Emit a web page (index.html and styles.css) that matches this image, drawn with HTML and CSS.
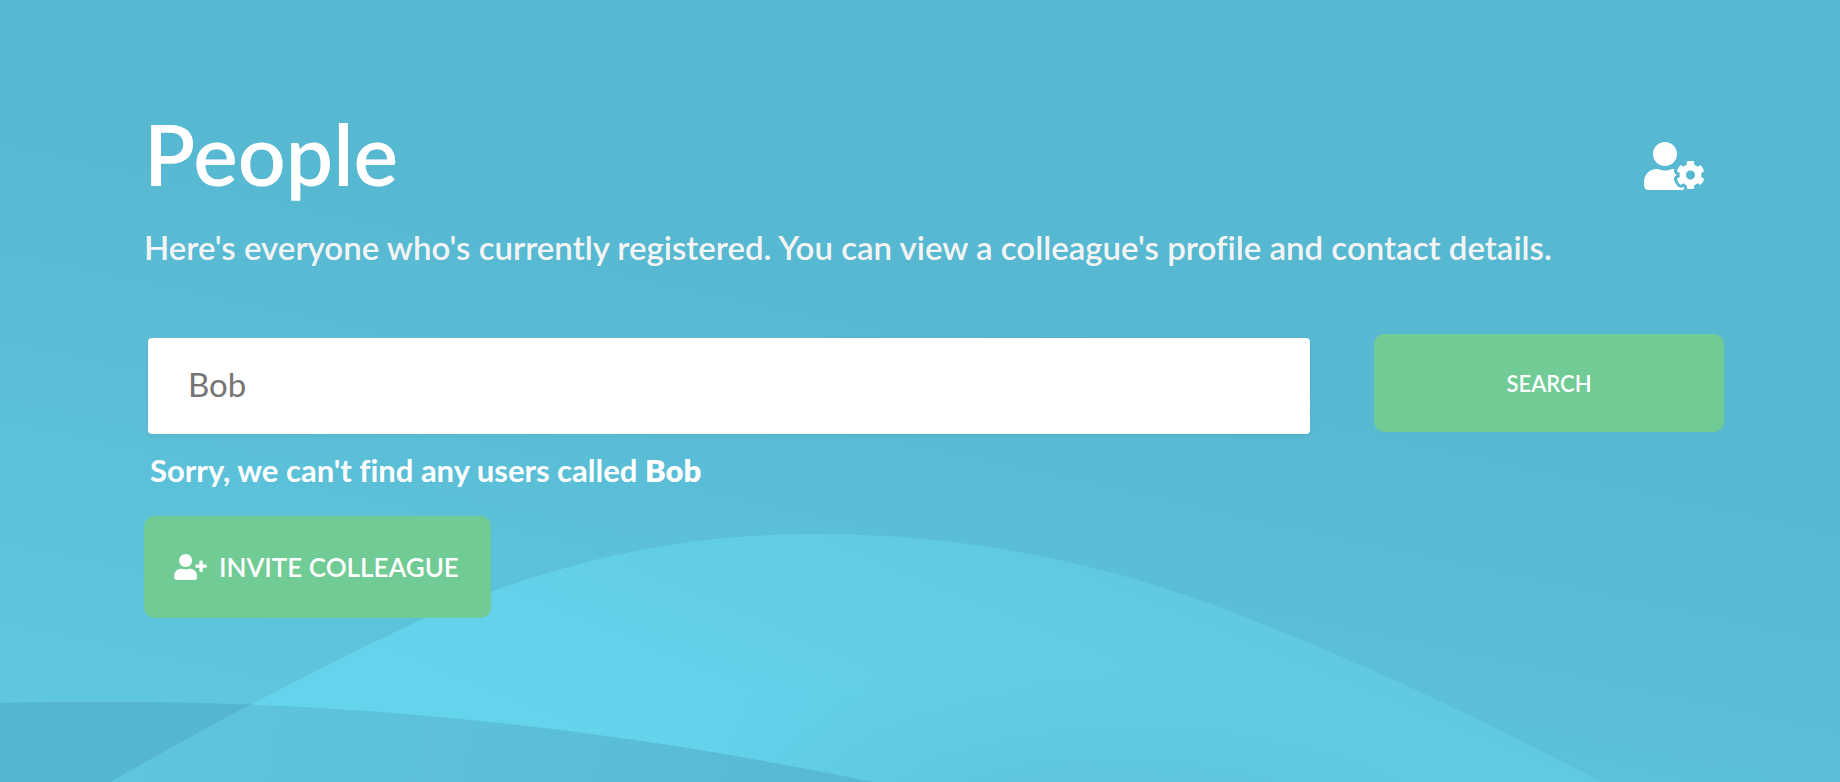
FILE: index.html
```
<!DOCTYPE html>
<html lang="en">
<head>
    <meta charset="UTF-8">
    <meta name="viewport" content="width=device-width, initial-scale=1.0">
    <title>People</title>
    <link rel="stylesheet" href="styles.css">
</head>
<body>
    <!-- Background waves -->
    <svg class="waves" viewBox="0 0 1840 782" preserveAspectRatio="none" aria-hidden="true">
        <defs>
            <linearGradient id="hill" gradientUnits="userSpaceOnUse" x1="560" y1="720" x2="700" y2="380">
                <stop offset="0" stop-color="#64d4ed"/>
                <stop offset="1" stop-color="#60c9df"/>
            </linearGradient>
            <radialGradient id="shade" gradientUnits="userSpaceOnUse" cx="0" cy="0" r="1" gradientTransform="translate(1130 870) rotate(6) scale(540 210)">
                <stop offset="0" stop-color="#58bbd4" stop-opacity="0.9"/>
                <stop offset="0.4" stop-color="#5abfd7" stop-opacity="0.6"/>
                <stop offset="0.7" stop-color="#5cc4dc" stop-opacity="0.35"/>
                <stop offset="1" stop-color="#5fcbe6" stop-opacity="0"/>
            </radialGradient>
            <linearGradient id="front" gradientUnits="userSpaceOnUse" x1="150" y1="700" x2="850" y2="800">
                <stop offset="0" stop-color="#5ec5dd"/>
                <stop offset="1" stop-color="#58bad2"/>
            </linearGradient>
            <clipPath id="hillClip">
                <path d="M111 782C250 702 352 652 425 618C560 560 680 534 815 534C960 534 1090 560 1213 605C1340 653 1450 703 1602 782Z"/>
            </clipPath>
        </defs>
        <path fill="#56b6cf" d="M0 703C200 698 430 706 700 750Q790 765 874 782H0Z"/>
        <g clip-path="url(#hillClip)">
            <rect fill="url(#hill)" y="500" width="1840" height="282"/>
            <rect fill="url(#shade)" y="500" width="1840" height="282"/>
            <path fill="url(#front)" d="M0 703C200 698 430 706 700 750Q790 765 874 782H0Z"/>
        </g>
    </svg>

    <main class="container">
        <div class="header">
            <h1>People</h1>
            <a class="manage" href="#" aria-label="Manage people">
                <svg viewBox="0 0 640 512" fill="currentColor" aria-hidden="true">
                    <path d="M610.5 373.3c2.6-14.1 2.6-28.5 0-42.6l25.8-14.9c3-1.7 4.3-5.2 3.3-8.5-6.7-21.6-18.2-41.2-33.2-57.4-2.3-2.5-6-3.1-9-1.4l-25.8 14.9c-10.9-9.3-23.4-16.5-36.9-21.3v-29.8c0-3.4-2.4-6.4-5.7-7.1-22.3-5-45-4.8-66.2 0-3.3.7-5.7 3.7-5.7 7.1v29.8c-13.5 4.8-26 12-36.9 21.3l-25.8-14.9c-2.9-1.7-6.7-1.1-9 1.4-15 16.2-26.5 35.8-33.2 57.4-1 3.3.4 6.8 3.3 8.5l25.8 14.9c-2.6 14.1-2.6 28.5 0 42.6l-25.8 14.9c-3 1.7-4.3 5.2-3.3 8.5 6.7 21.6 18.2 41.1 33.2 57.4 2.3 2.5 6 3.1 9 1.4l25.8-14.9c10.9 9.3 23.4 16.5 36.9 21.3v29.8c0 3.4 2.4 6.4 5.7 7.1 22.3 5 45 4.8 66.2 0 3.3-.7 5.7-3.7 5.7-7.1v-29.8c13.5-4.8 26-12 36.9-21.3l25.8 14.9c2.9 1.7 6.7 1.1 9-1.4 15-16.2 26.5-35.8 33.2-57.4 1-3.3-.4-6.8-3.3-8.5l-25.8-14.9zM496 400.5c-26.8 0-48.5-21.8-48.5-48.5s21.8-48.5 48.5-48.5 48.5 21.8 48.5 48.5-21.7 48.5-48.5 48.5zM224 256c70.7 0 128-57.3 128-128S294.7 0 224 0 96 57.3 96 128s57.3 128 128 128zm201.2 226.5c-2.3-1.2-4.6-2.6-6.8-3.9l-7.9 4.6c-6 3.4-12.8 5.3-19.6 5.3-10.9 0-21.4-4.6-28.9-12.6-18.3-19.8-32.3-43.9-40.2-69.6-5.5-17.7 1.9-36.4 17.9-45.7l7.9-4.6c-.1-2.6-.1-5.2 0-7.8l-7.9-4.6c-16-9.2-23.4-28-17.9-45.7.9-2.9 2.2-5.8 3.2-8.7-3.8-.3-7.5-1.2-11.4-1.2h-16.7c-22.2 10.2-46.9 16-72.9 16s-50.6-5.8-72.9-16h-16.7C60.2 288 0 348.2 0 422.4V464c0 26.5 21.5 48 48 48h352c10.1 0 19.5-3.2 27.2-8.5-1.2-3.8-2-7.7-2-11.8v-9.2z"/>
                </svg>
            </a>
        </div>
        <p class="intro">Here's everyone who's currently registered. You can view a colleague's profile and contact details.</p>

        <form class="search">
            <input class="search-input" type="text" placeholder="Bob" aria-label="Name">
            <button class="btn search-btn" type="submit">SEARCH</button>
        </form>

        <p class="message">Sorry, we can't find any users called <strong>Bob</strong></p>

        <button class="btn invite-btn" type="button">
            <svg viewBox="0 0 640 512" fill="currentColor" aria-hidden="true">
                <path d="M624 208h-64v-64c0-8.800-7.200-16-16-16h-32c-8.800 0-16 7.200-16 16v64h-64c-8.800 0-16 7.200-16 16v32c0 8.800 7.200 16 16 16h64v64c0 8.800 7.200 16 16 16h32c8.800 0 16-7.200 16-16v-64h64c8.800 0 16-7.200 16-16v-32c0-8.800-7.200-16-16-16zm-400 48c70.700 0 128-57.300 128-128S294.700 0 224 0 96 57.300 96 128s57.300 128 128 128zm89.600 32h-16.700c-22.200 10.200-46.900 16-72.900 16s-50.600-5.800-72.900-16h-16.700C60.200 288 0 348.200 0 422.400V464c0 26.500 21.500 48 48 48h352c26.500 0 48-21.500 48-48v-41.600c0-74.200-60.200-134.400-134.400-134.400z"/>
            </svg>
            INVITE COLLEAGUE
        </button>
    </main>
</body>
</html>
```
FILE: styles.css
```
* {
    box-sizing: border-box;
}
body {
    font-family: Lato, sans-serif;
    font-variant-ligatures: none;
    margin: 0;
    min-height: 100vh;
    color: white;
    background: linear-gradient(192deg, #57b8d1 42%, #60c9e1 100%);
}
.waves {
    position: absolute;
    top: 0;
    left: 0;
    width: 100%;
    height: 100%;
    z-index: -1;
}
.container {
    padding: 106px 116px 40px 144px;
}
.header {
    display: flex;
    justify-content: space-between;
    align-items: center;
    padding-right: 20px;
}
h1 {
    margin: 0;
    font-size: 84px;
    font-weight: 600;
    line-height: 96px;
}
.manage {
    margin-top: 24px;
    color: white;
}
.manage svg {
    display: block;
    width: 60px;
    height: 48px;
}
.intro {
    margin: 24px 0 66px;
    font-size: 33px;
    font-weight: 600;
    line-height: 42px;
    color: #f4f4f4;
}
.search {
    display: flex;
    gap: 64px;
    padding-left: 4px;
}
.search-input {
    flex: 1;
    height: 96px;
    margin-top: 4px;
    padding: 0 40px 4px;
    border: none;
    border-radius: 4px;
    box-shadow: 0 2px 4px rgba(0,0,0,0.05);
    font-family: inherit;
    font-size: 33px;
}
.search-input::placeholder {
    color: #757575;
}
.btn {
    border: none;
    border-radius: 10px;
    background-color: #70cb95;
    color: white;
    font-family: inherit;
    font-weight: 600;
    cursor: pointer;
}
.search-btn {
    width: 350px;
    height: 98px;
    font-size: 22px;
}
.message {
    margin: 16px 0 26px;
    padding-left: 6px;
    font-size: 31px;
    font-weight: 700;
    line-height: 40px;
}
.message strong {
    font-weight: 800;
}
.invite-btn {
    display: flex;
    align-items: center;
    gap: 12px;
    height: 102px;
    padding: 0 32px 0 30px;
    font-size: 26px;
}
.invite-btn svg {
    width: 33px;
    height: 26px;
}
```
